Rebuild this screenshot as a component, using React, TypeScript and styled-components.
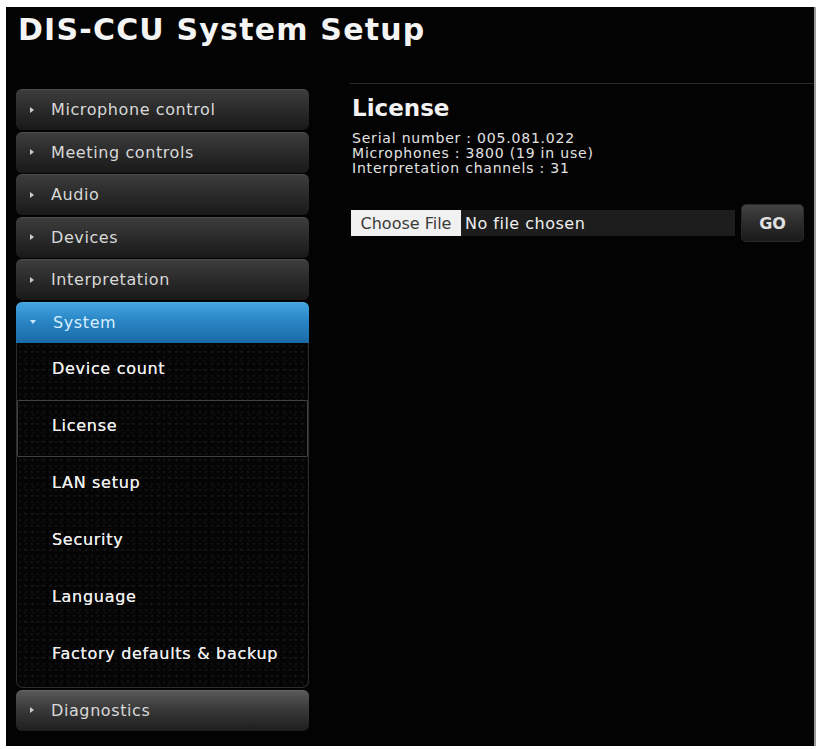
import React from "react";
import styled, { createGlobalStyle } from "styled-components";

const Global = createGlobalStyle`
  html, body { margin: 0; padding: 0; background: #ffffff; }
  body { font-family: "DejaVu Sans", Verdana, sans-serif; }
`;

const Page = styled.div`
  width: 821px;
  height: 749px;
  padding: 7px 0 0 6px;
  box-sizing: border-box;
`;

const Frame = styled.div`
  width: 810px;
  height: 739px;
  background: #030303;
  border-right: 2px solid #9a9a9a;
  box-sizing: border-box;
  display: flex;
  flex-direction: column;
`;

const Title = styled.h1`
  margin: 0;
  height: 76px;
  padding: 5px 0 0 12px;
  box-sizing: border-box;
  font-family: "DejaVu Sans", Verdana, sans-serif;
  font-weight: bold;
  font-size: 30px;
  letter-spacing: 1.2px;
  color: #f4f4f4;
  line-height: 36px;
`;

const Body = styled.div`
  display: flex;
  gap: 41px;
  flex: 1;
`;

const Sidebar = styled.nav`
  width: 293px;
  margin-left: 10px;
  padding-top: 6px;
  display: flex;
  flex-direction: column;
  gap: 1.6px;
`;

const MenuButton = styled.div<{ $variant?: "normal" | "active" | "light" }>`
  height: 41px;
  display: flex;
  align-items: center;
  padding-left: 14px;
  box-sizing: border-box;
  font-size: 16px;
  letter-spacing: 0.6px;
  color: ${(p) => (p.$variant === "active" ? "#d6f0ff" : "#d8d8d8")};
  background: ${(p) =>
    p.$variant === "active"
      ? "linear-gradient(to bottom, #45a6e0 0%, #2a86c6 45%, #1a6aa6 100%)"
      : p.$variant === "light"
      ? "linear-gradient(to bottom, #5a5a5a 0%, #3a3a3a 45%, #1e1e1e 100%)"
      : "linear-gradient(to bottom, #3e3e3e 0%, #2c2c2c 45%, #191919 100%)"};
  border-radius: ${(p) => (p.$variant === "active" ? "6px 6px 0 0" : "6px")};
  box-shadow: inset 0 1px 0 rgba(255, 255, 255, 0.08);
`;

const Arrow = styled.span<{ $down?: boolean }>`
  width: 0;
  height: 0;
  margin-right: 17px;
  border-style: solid;
  ${(p) =>
    p.$down
      ? `border-width: 4px 3px 0 3px; border-color: #cfe8f8 transparent transparent transparent;`
      : `border-width: 3px 0 3px 4px; border-color: transparent transparent transparent #cccccc;`}
`;

const SubMenu = styled.div`
  margin-top: -1.6px;
  background-color: #050505;
  background-image: radial-gradient(rgba(255, 255, 255, 0.05) 1px, transparent 1.2px),
    radial-gradient(rgba(255, 255, 255, 0.035) 1px, transparent 1.2px);
  background-size: 6px 6px, 9px 9px;
  background-position: 0 0, 3px 4px;
  border: 1px solid #2e2e2e;
  border-top: none;
  border-radius: 0 0 7px 7px;
  display: flex;
  flex-direction: column;
  padding-bottom: 2px;
`;

const SubItem = styled.div<{ $selected?: boolean }>`
  height: 57px;
  display: flex;
  align-items: center;
  padding: 0 0 5px 35px;
  box-sizing: border-box;
  font-size: 16px;
  letter-spacing: 0.7px;
  color: #ececec;
  text-shadow: 0 0 0.4px #ffffff;
  ${(p) =>
    p.$selected
      ? `border: 1px solid #3c4246; border-radius: 1px; padding-left: 34px;`
      : ``}
`;

const Content = styled.main`
  flex: 1;
  border-top: 1px solid #2b2b2b;
  padding: 9px 0 0 2px;
  color: #e8e8e8;
`;

const Heading = styled.h2`
  margin: 0;
  font-family: "DejaVu Sans", Verdana, sans-serif;
  font-weight: bold;
  font-size: 23px;
  line-height: 30px;
  color: #f2f2f2;
`;

const Info = styled.div`
  margin-top: 8px;
  font-size: 14px;
  letter-spacing: 0.8px;
  line-height: 15px;
  color: #e2e2e2;
`;

const FileRow = styled.div`
  margin-top: 28px;
  display: flex;
  align-items: center;
  padding-right: 10px;
`;

const ChooseButton = styled.span`
  height: 26px;
  width: 110px;
  box-sizing: border-box;
  display: flex;
  align-items: center;
  justify-content: center;
  background: #f1f1f1;
  color: #3a3a3a;
  font-size: 16px;
  margin-left: -1px;
`;

const FileName = styled.span`
  height: 26px;
  width: 274px;
  background: #1d1d1d;
  display: flex;
  align-items: center;
  padding-left: 4px;
  box-sizing: border-box;
  font-size: 16px;
  letter-spacing: 0.5px;
  color: #efefef;
`;

const GoButton = styled.button`
  margin-left: 6px;
  width: 63px;
  height: 38px;
  border: 1px solid #2a2a2a;
  border-radius: 5px;
  background: linear-gradient(to bottom, #434343 0%, #2c2c2c 50%, #1a1a1a 100%);
  color: #e0e0e0;
  font-family: "DejaVu Sans", Verdana, sans-serif;
  font-weight: bold;
  font-size: 16px;
  padding: 0;
`;

const menuTop = ["Microphone control", "Meeting controls", "Audio", "Devices", "Interpretation"];
const subItems = ["Device count", "License", "LAN setup", "Security", "Language", "Factory defaults & backup"];

export default function App() {
  return (
    <Page>
      <Global />
      <Frame>
        <Title>DIS-CCU System Setup</Title>
        <Body>
          <Sidebar>
            {menuTop.map((m) => (
              <MenuButton key={m}>
                <Arrow />
                {m}
              </MenuButton>
            ))}
            <MenuButton $variant="active">
              <Arrow $down />
              System
            </MenuButton>
            <SubMenu>
              {subItems.map((s) => (
                <SubItem key={s} $selected={s === "License"}>
                  {s}
                </SubItem>
              ))}
            </SubMenu>
            <MenuButton $variant="light">
              <Arrow />
              Diagnostics
            </MenuButton>
          </Sidebar>
          <Content>
            <Heading>License</Heading>
            <Info>
              <div>Serial number : 005.081.022</div>
              <div>Microphones : 3800 (19 in use)</div>
              <div>Interpretation channels : 31</div>
            </Info>
            <FileRow>
              <ChooseButton>Choose File</ChooseButton>
              <FileName>No file chosen</FileName>
              <GoButton>GO</GoButton>
            </FileRow>
          </Content>
        </Body>
      </Frame>
    </Page>
  );
}
